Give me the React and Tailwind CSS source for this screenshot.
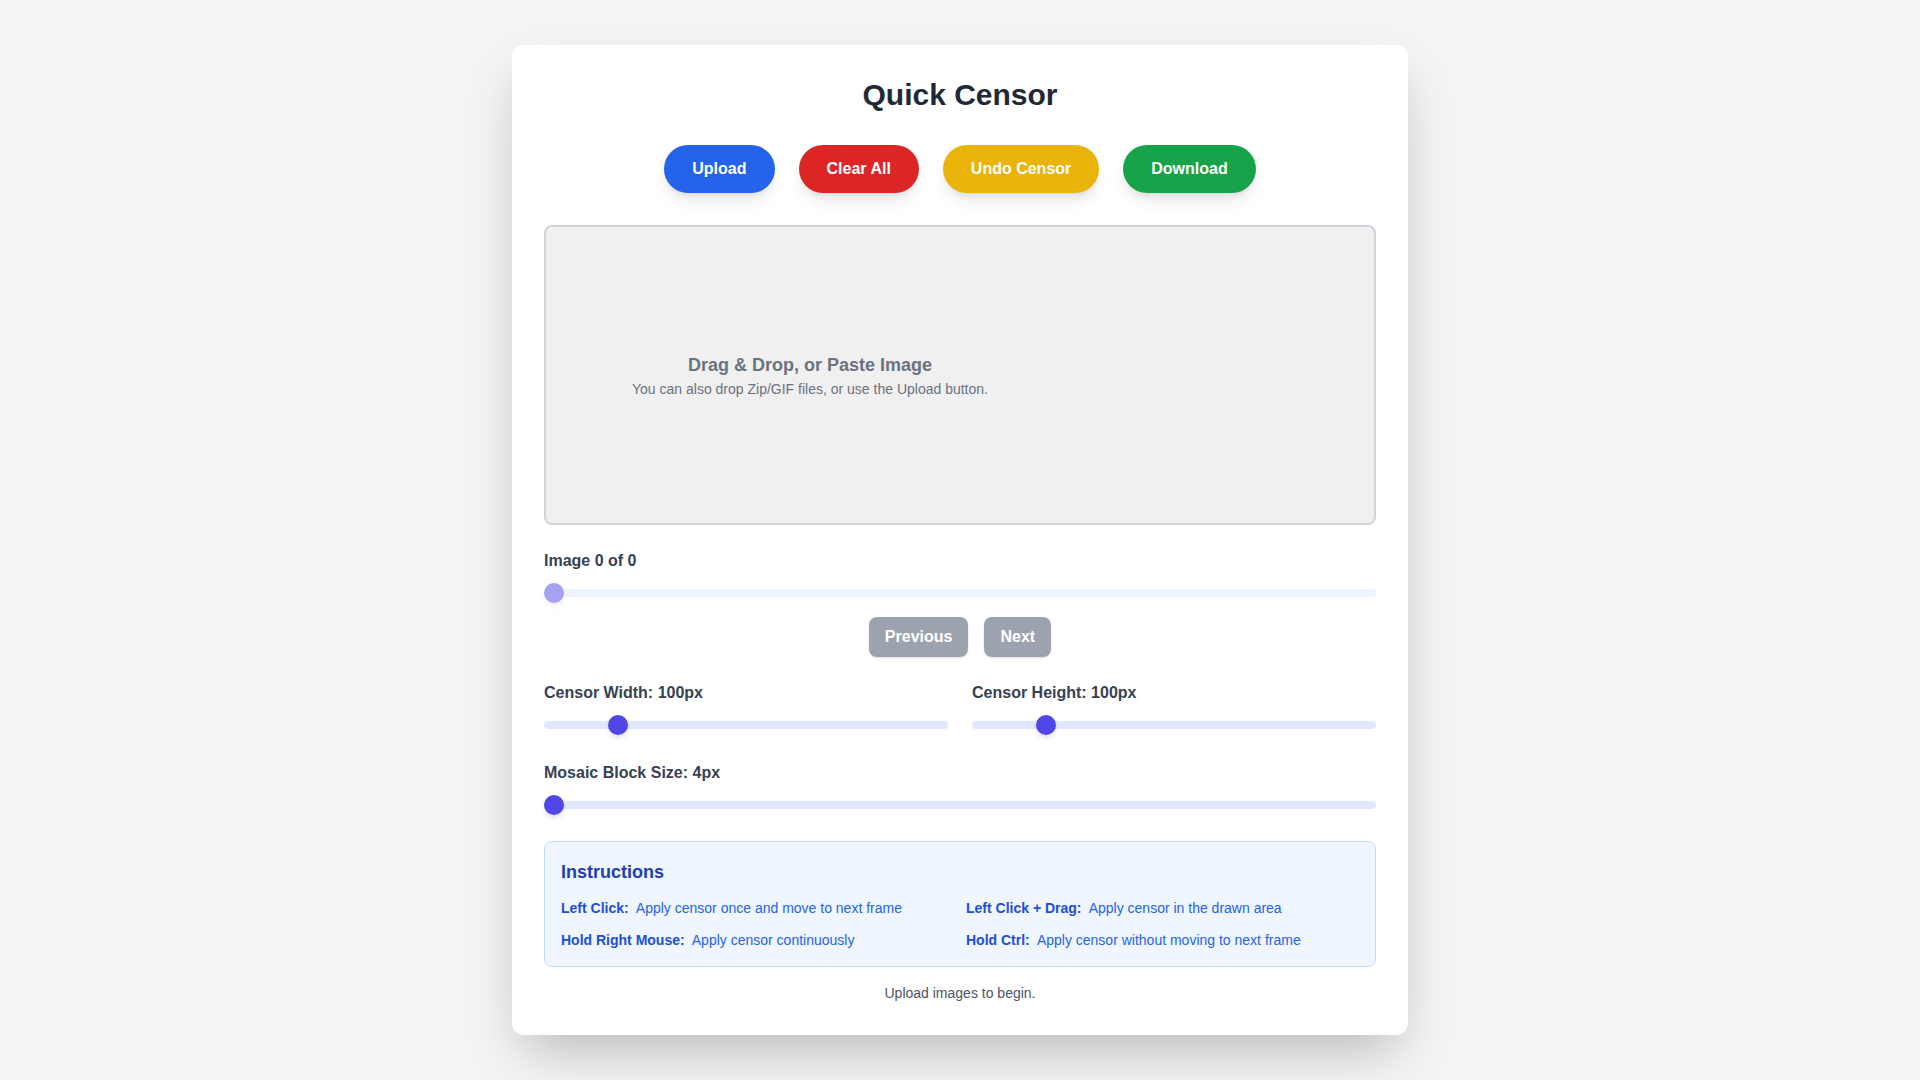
import { useState } from 'react';

const font = { fontFamily: '"Liberation Sans", Arial, sans-serif' };

// palette kept to the older tailwind hex values the screenshot was made with
const sliderCls =
  'w-full h-2 appearance-none rounded-lg bg-[#e0e7ff] outline-none cursor-pointer disabled:opacity-50 disabled:cursor-default ' +
  '[&::-webkit-slider-thumb]:appearance-none [&::-webkit-slider-thumb]:h-5 [&::-webkit-slider-thumb]:w-5 ' +
  '[&::-webkit-slider-thumb]:rounded-full [&::-webkit-slider-thumb]:bg-[#4f46e5] [&::-webkit-slider-thumb]:shadow-md';

const Slider = ({ label, min, max, value, onChange, disabled }) => (
  <div>
    {label && <label className="mb-2 block font-semibold text-[#374151]">{label}</label>}
    <div className="flex h-6 items-center">
      <input type="range" min={min} max={max} value={value} disabled={disabled} onChange={(e) => onChange && onChange(Number(e.target.value))} className={sliderCls} />
    </div>
  </div>
);

const Pill = ({ className, children }) => (
  <button className={`rounded-full px-7 py-3 font-bold text-white shadow-lg ${className}`}>{children}</button>
);

const tips = [
  ['Left Click:', 'Apply censor once and move to next frame'],
  ['Left Click + Drag:', 'Apply censor in the drawn area'],
  ['Hold Right Mouse:', 'Apply censor continuously'],
  ['Hold Ctrl:', 'Apply censor without moving to next frame'],
];

export default function App() {
  const [w, setW] = useState(100);
  const [h, setH] = useState(100);
  const [block, setBlock] = useState(4);

  return (
    <div className="min-h-screen flex items-center justify-center bg-[#f3f4f6]" style={font}>
      <div className="w-full max-w-4xl rounded-xl bg-white p-8 shadow-2xl">
        <h1 className="mb-8 text-center text-3xl font-bold text-[#1f2937]">Quick Censor</h1>

        <div className="mb-8 flex justify-center gap-6">
          <Pill className="bg-[#2563eb]">Upload</Pill>
          <Pill className="bg-[#dc2626]">Clear All</Pill>
          <Pill className="bg-[#eab308]">Undo Censor</Pill>
          <Pill className="bg-[#16a34a]">Download</Pill>
        </div>

        <div className="flex h-[300px] items-center justify-center rounded-lg border-2 border-[#d1d5db] bg-[#f0f0f0]">
          <div className="text-center text-[#6b7280]">
            <p className="text-lg font-semibold">Drag &amp; Drop, or Paste Image</p>
            <p className="text-sm">You can also drop Zip/GIF files, or use the Upload button.</p>
          </div>
          <div className="h-[150px] w-[300px]" />
        </div>

        <div className="mt-6">
          <Slider label="Image 0 of 0" min={0} max={0} value={0} disabled />
          <div className="mt-3 flex justify-center gap-4">
            <button disabled className="rounded-lg bg-[#9ca3af] px-4 py-2 font-bold text-white shadow-sm">Previous</button>
            <button disabled className="rounded-lg bg-[#9ca3af] px-4 py-2 font-bold text-white shadow-sm">Next</button>
          </div>
        </div>

        <div className="mt-6 grid grid-cols-2 gap-6">
          <Slider label={`Censor Width: ${w}px`} min={20} max={500} value={w} onChange={setW} />
          <Slider label={`Censor Height: ${h}px`} min={20} max={500} value={h} onChange={setH} />
        </div>

        <div className="mt-6">
          <Slider label={`Mosaic Block Size: ${block}px`} min={4} max={64} value={block} onChange={setBlock} />
        </div>

        <div className="mt-6 rounded-lg border border-[#bfdbfe] bg-[#eff6ff] p-4">
          <h2 className="mb-3 text-lg font-semibold text-[#1e40af]">Instructions</h2>
          <div className="grid grid-cols-2 gap-3 text-sm">
            {tips.map(([k, v]) => (
              <p key={k} className="text-[#2563eb]">
                <span className="mr-1 font-semibold text-[#1d4ed8]">{k}</span> {v}
              </p>
            ))}
          </div>
        </div>

        <p className="mt-4 text-center text-sm text-[#4b5563]">Upload images to begin.</p>
      </div>
    </div>
  );
}
